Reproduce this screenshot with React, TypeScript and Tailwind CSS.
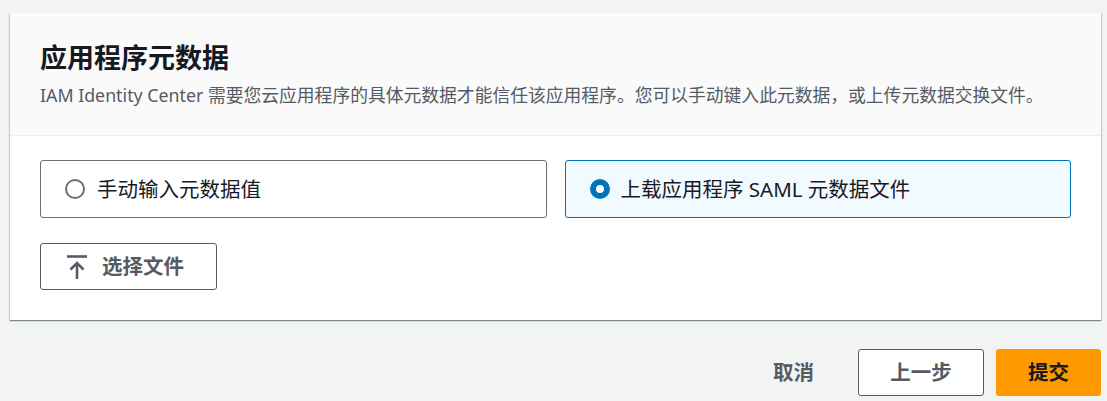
import React, { useState } from 'react';

const font = { fontFamily: '"Noto Sans", "Noto Sans CJK SC", sans-serif' };

function Radio({ checked }: { checked: boolean }) {
  return checked ? (
    <span className="w-[20px] h-[20px] rounded-full border-[6px] border-[#0073bb] bg-white shrink-0" />
  ) : (
    <span className="w-[20px] h-[20px] rounded-full border-2 border-[#687078] bg-white shrink-0" />
  );
}

function UploadIcon() {
  return (
    <svg width="20" height="24" viewBox="0 0 20 24" fill="none" stroke="#545b64" strokeWidth="2.6">
      <path d="M0 1.5H20" />
      <path d="M10 8V24" />
      <path d="M3.5 14.5L10 8L16.5 14.5" />
    </svg>
  );
}

export default function App() {
  const [mode, setMode] = useState<'manual' | 'upload'>('upload');

  const tiles = [
    { id: 'manual' as const, label: '手动输入元数据值' },
    { id: 'upload' as const, label: '上载应用程序 SAML 元数据文件' },
  ];

  return (
    <div className="h-[401px] bg-[#f2f3f3] pt-[13px] pl-[10px] pr-[6px]" style={font}>
      <div className="bg-white shadow-[0_1px_1px_0_rgba(0,28,36,0.3),1px_1px_1px_0_rgba(0,28,36,0.15),-1px_1px_1px_0_rgba(0,28,36,0.15)]">
        <div className="bg-[#fafafa] border-b border-[#eaeded] px-[30px] pt-[27px] pb-[28px]">
          <h2 className="text-[27px] leading-[36px] font-bold text-[#16191f]">应用程序元数据</h2>
          <p className="mt-[7px] text-[17.8px] leading-[24px] text-[#545b64]">
            IAM Identity Center 需要您云应用程序的具体元数据才能信任该应用程序。您可以手动键入此元数据，或上传元数据交换文件。
          </p>
        </div>

        <div className="px-[30px] pt-[24px] pb-[30px]">
          <div className="grid grid-cols-2 gap-[18px]">
            {tiles.map(t => {
              const on = mode === t.id;
              return (
                <button
                  key={t.id}
                  onClick={() => setMode(t.id)}
                  className={
                    on
                      ? 'h-[58px] flex items-center gap-[11px] pl-[24px] rounded-[3px] border border-[#0073bb] bg-[#f1faff] text-left'
                      : 'h-[58px] flex items-center gap-[12px] pl-[24px] rounded-[3px] border border-[#687078] bg-white text-left'
                  }
                >
                  <Radio checked={on} />
                  <span className="text-[20.5px] leading-[28px] text-[#16191f]">{t.label}</span>
                </button>
              );
            })}
          </div>

          <button className="mt-[25px] h-[47px] flex items-center gap-[15px] pl-[26px] pr-[32px] border border-[#545b64] rounded-[3px] bg-white">
            <UploadIcon />
            <span className="text-[20.5px] font-bold text-[#545b64]">选择文件</span>
          </button>
        </div>
      </div>

      <div className="mt-[29px] flex justify-end items-center">
        <button className="h-[47px] px-[20px] mr-[24px] text-[20.5px] font-bold text-[#545b64]">取消</button>
        <button className="h-[47px] w-[126px] border border-[#545b64] rounded-[3px] bg-white text-[20.5px] font-bold text-[#545b64]">上一步</button>
        <button className="ml-[12px] h-[47px] w-[105px] rounded-[3px] bg-[#ff9900] text-[20.5px] font-bold text-[#16191f]">提交</button>
      </div>
    </div>
  );
}
